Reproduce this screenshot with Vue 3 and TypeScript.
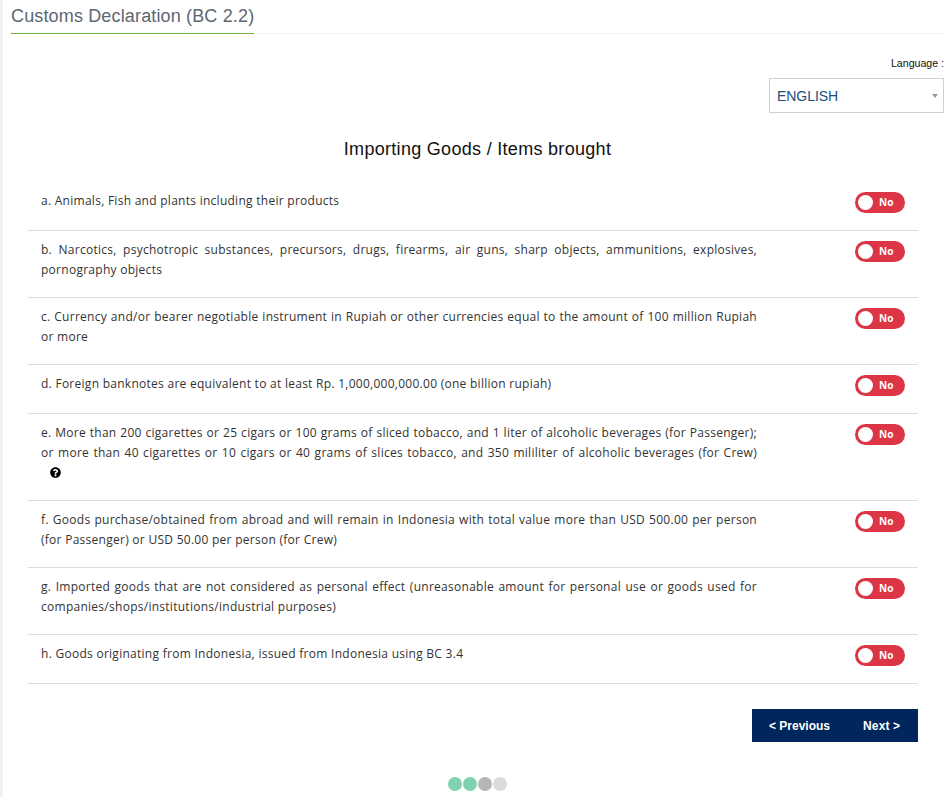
<script setup lang="ts">
interface Item { text: string; help?: boolean }
const items: Item[] = [
  { text: 'a. Animals, Fish and plants including their products' },
  { text: 'b. Narcotics, psychotropic substances, precursors, drugs, firearms, air guns, sharp objects, ammunitions, explosives, pornography objects' },
  { text: 'c. Currency and/or bearer negotiable instrument in Rupiah or other currencies equal to the amount of 100 million Rupiah or more' },
  { text: 'd. Foreign banknotes are equivalent to at least Rp. 1,000,000,000.00 (one billion rupiah)' },
  { text: 'e. More than 200 cigarettes or 25 cigars or 100 grams of sliced tobacco, and 1 liter of alcoholic beverages (for Passenger); or more than 40 cigarettes or 10 cigars or 40 grams of slices tobacco, and 350 mililiter of alcoholic beverages (for Crew)', help: true },
  { text: 'f. Goods purchase/obtained from abroad and will remain in Indonesia with total value more than USD 500.00 per person (for Passenger) or USD 50.00 per person (for Crew)' },
  { text: 'g. Imported goods that are not considered as personal effect (unreasonable amount for personal use or goods used for companies/shops/institutions/industrial purposes)' },
  { text: 'h. Goods originating from Indonesia, issued from Indonesia using BC 3.4' }
]
const dots = ['#7fd1b1', '#7fd1b1', '#b5b5b5', '#dcdcdc']
</script>

<template>
  <div class="page">
    <div class="title-bar"><h1 class="title">Customs Declaration (BC 2.2)</h1></div>
    <div class="lang">
      <div class="lang-label">Language :</div>
      <div class="select"><span>ENGLISH</span><i class="caret"></i></div>
    </div>
    <h2 class="heading">Importing Goods / Items brought</h2>
    <div class="list">
      <div v-for="item in items" :key="item.text" class="row">
        <div class="text">
          {{ item.text }}
          <span v-if="item.help" class="help">
            <svg width="11" height="11" viewBox="0 0 512 512"><path fill="#000" d="M504 256c0 137-111 248-248 248S8 393 8 256 119 8 256 8s248 111 248 248zM262.700 90c-54.500 0-89.300 23-116.500 63.800-3.500 5.300-2.400 12.400 2.700 16.300l34.700 26.300c5.200 3.900 12.600 3 16.700-2.100 17.900-22.700 30.100-35.800 57.300-35.800 20.400 0 45.700 13.100 45.700 33 0 15-12.400 22.700-32.600 34-23.600 13.200-54.800 29.700-54.800 70.900V300c0 6.600 5.400 12 12 12h56c6.600 0 12-5.400 12-12v-1.300c0-28.500 83.400-29.700 83.400-106.800 0-58-60.200-101.900-116.600-101.900zM256 338c-25.400 0-46 20.600-46 46 0 25.400 20.600 46 46 46s46-20.600 46-46c0-25.400-20.600-46-46-46z"/></svg>
          </span>
        </div>
        <div class="toggle"><span class="knob"></span><span class="no">No</span></div>
      </div>
    </div>
    <div class="actions">
      <div class="btns">
        <span class="btn prev">&lt; Previous</span>
        <span class="btn next">Next &gt;</span>
      </div>
    </div>
    <div class="dots">
      <span v-for="(c, i) in dots" :key="i" class="dot" :style="{ background: c }"></span>
    </div>
  </div>
</template>

<style>
html, body { margin: 0; background: #fff; overflow: hidden; }
</style>

<style scoped>
.page {
  width: 941px;
  height: 797px;
  margin-left: 3px;
  background: #fff;
  position: relative;
  box-shadow: -3px 0 0 #f1f1f1;
  box-sizing: border-box;
  overflow: hidden;
  font-family: "Liberation Sans", Arial, sans-serif;
}
.title-bar {
  margin-left: 8px;
  height: 33px;
  border-bottom: 1px dotted #e3e3e3;
}
.title {
  display: inline-block;
  margin: 0;
  height: 33px;
  line-height: 32px;
  font-size: 18px;
  letter-spacing: 0.15px;
  font-weight: 400;
  color: #5c6770;
  border-bottom: 1px solid #6cb33f;
}
.lang { margin-top: 23px; display: flex; flex-direction: column; align-items: flex-end; }
.lang-label { font-size: 10.6px; line-height: 13px; color: #111; }
.select {
  margin-top: 8px;
  width: 175px;
  height: 35px;
  box-sizing: border-box;
  border: 1px solid #ccd0da;
  display: flex;
  align-items: center;
  justify-content: space-between;
  padding: 0 5px 0 7px;
  font-size: 14px;
  letter-spacing: -0.05px;
  color: #1b4f7a;
}
.caret {
  width: 0;
  height: 0;
  border-left: 3px solid transparent;
  border-right: 3px solid transparent;
  border-top: 4px solid #999;
}
.heading {
  margin: 24px 0 0;
  width: 949px;
  text-align: center;
  font-size: 18px;
  letter-spacing: 0.3px;
  line-height: 24px;
  font-weight: 400;
  color: #111;
}
.list { margin: 21px 0 0 25px; width: 890px; }
.row {
  display: flex;
  justify-content: space-between;
  padding: 9px 13px 17px 13px;
  border-bottom: 1px solid #dcdcdc;
}
.text {
  width: 716px;
  font-family: "Open Sans", sans-serif;
  font-size: 12px;
  letter-spacing: 0.27px;
  line-height: 20px;
  color: #333;
  text-align: justify;
}
.help {
  display: inline-flex;
  align-items: center;
  box-sizing: border-box;
  width: 100%;
  height: 20px;
  padding: 0 0 2px 9px;
  vertical-align: top;
}
.toggle {
  margin-top: 1px;
  width: 50px;
  height: 21px;
  border-radius: 11px;
  background: #dc3545;
  position: relative;
  display: flex;
  align-items: center;
  flex: none;
}
.knob {
  position: absolute;
  left: 3px;
  top: 3px;
  width: 15px;
  height: 15px;
  border-radius: 50%;
  background: #fff;
}
.no {
  margin: -2px 0 0 24px;
  font-size: 10px;
  font-weight: 700;
  color: #fff;
  font-family: "Open Sans", sans-serif;
}
.actions { margin: 25px 0 0 749px; }
.btns {
  width: 166px;
  height: 33px;
  background: #00275d;
  display: flex;
  align-items: center;
  color: #fff;
  font-size: 12px;
  font-weight: 700;
}
.prev { margin-left: 17px; }
.next { margin-left: 33px; letter-spacing: 0.15px; }
.dots {
  position: absolute;
  top: 777px;
  left: 445px;
  display: flex;
  gap: 1px;
}
.dot { width: 14px; height: 14px; border-radius: 50%; }
</style>
